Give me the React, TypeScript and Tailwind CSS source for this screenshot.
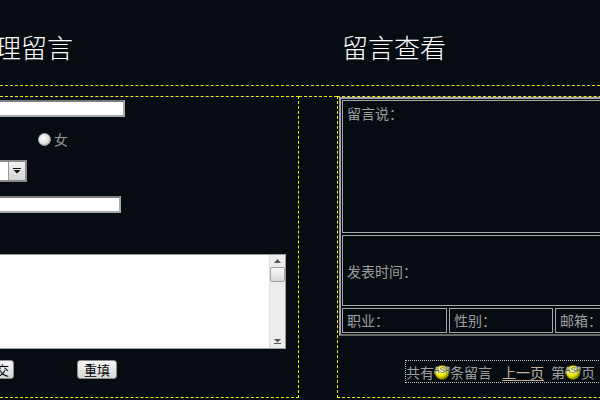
import React from "react";

function AspIcon() {
  return (
    <svg width="16" height="16" viewBox="0 0 16 16" className="inline-block align-[-4px]">
      <defs>
        <radialGradient id="ay" cx="40%" cy="35%" r="70%">
          <stop offset="0%" stopColor="#ffff90" />
          <stop offset="55%" stopColor="#e8e800" />
          <stop offset="100%" stopColor="#6a6a00" />
        </radialGradient>
      </defs>
      <circle cx="8" cy="8.5" r="7.2" fill="url(#ay)" stroke="#4a4a00" strokeWidth="0.8" />
      <text x="8" y="9" textAnchor="middle" fontSize="8.5" fontWeight="bold" letterSpacing="-0.4" fill="#1a1a1a" stroke="#ffffff" strokeWidth="0.35" fontFamily="Liberation Sans, sans-serif">ASP</text>
    </svg>
  );
}

function Radio() {
  return (
    <svg width="13" height="13" viewBox="0 0 13 13">
      <defs>
        <radialGradient id="rg" cx="40%" cy="40%" r="65%">
          <stop offset="0%" stopColor="#ffffff" />
          <stop offset="70%" stopColor="#dcdcdc" />
          <stop offset="100%" stopColor="#a0a0a0" />
        </radialGradient>
      </defs>
      <circle cx="6.5" cy="6.5" r="6" fill="url(#rg)" stroke="#b0b0b0" strokeWidth="0.8" />
    </svg>
  );
}

export default function App() {
  return (
    <div className="w-[600px] h-[400px] overflow-hidden bg-[#070c13] font-['Noto_Sans_CJK_SC',sans-serif]">
      {/* header */}
      <div className="h-[86px] border-b border-dashed border-[#e6e600] flex items-start pt-[31px]">
        <div className="ml-[-31px] w-[373px] shrink-0 text-[26px] leading-[32px] font-light text-white">管理留言</div>
        <div className="text-[26px] leading-[32px] font-light text-white">留言查看</div>
      </div>

      {/* body */}
      <div className="mt-[10px] flex h-[302px]">
        {/* left form box */}
        <div className="w-[299px] shrink-0 border-t border-r border-b border-dashed border-[#f0f000] flex flex-col items-start text-[14px]">
          <div className="mt-[3px] ml-[-6px] w-[131px] h-[17px] bg-white border-2 border-t-[#7c7c7c] border-l-[#7c7c7c] border-r-[#a8a8a8] border-b-[#a8a8a8]" />
          <div className="mt-[14px] h-[16px] flex items-center pl-[38px] gap-[3px]">
            <Radio />
            <span className="text-[14px] leading-[16px] text-[#9a9a9a]">女</span>
          </div>
          <div className="mt-[13px] ml-[-6px] h-[22px] w-[33px] flex border-2 border-[#8a8a8a] bg-white">
            <div className="flex-1" />
            <div className="w-[17px] h-full bg-gradient-to-b from-[#f4f4f4] to-[#d4d4d4] border-l border-[#9a9a9a] flex items-center justify-center">
              <svg width="8" height="6" viewBox="0 0 8 6">
                <rect x="0" y="0" width="8" height="1" fill="#111" />
                <path d="M0.5 2 L7.5 2 L4 5.5 Z" fill="#111" />
              </svg>
            </div>
          </div>
          <div className="mt-[14px] ml-[-6px] w-[127px] h-[17px] bg-white border-2 border-t-[#7c7c7c] border-l-[#7c7c7c] border-r-[#a8a8a8] border-b-[#a8a8a8]" />
          <div className="mt-[41px] ml-[-6px] w-[292px] h-[95px] bg-white border border-[#9c9c9c] flex justify-end">
            <div className="w-[16px] h-full bg-[#ececec] border-l border-[#e0e0e0] flex flex-col items-center justify-between py-[4px]">
              <div className="flex flex-col items-center gap-[4px]">
                <svg width="7" height="4" viewBox="0 0 7 4"><path d="M3.5 0 L7 4 L0 4 Z" fill="#555" /></svg>
                <div className="w-[15px] h-[15px] bg-gradient-to-b from-[#fafafa] to-[#d8d8d8] border border-[#a0a0a0] rounded-[2px]" />
              </div>
              <svg width="7" height="5" viewBox="0 0 7 5"><rect x="0" y="4" width="7" height="1" fill="#555" /><path d="M0 0 L7 0 L3.5 3.5 Z" fill="#555" /></svg>
            </div>
          </div>
          <div className="mt-[11px] flex items-start">
            <div className="ml-[-22px] w-[36px] h-[19px] bg-gradient-to-b from-[#f7f7f7] to-[#d6d6d6] border border-[#8a8a8a] rounded-[3px] text-[13px] leading-[17px] text-black text-center">提交</div>
            <div className="ml-[63px] w-[40px] h-[19px] bg-gradient-to-b from-[#f7f7f7] to-[#d6d6d6] border border-[#8a8a8a] rounded-[3px] text-[13px] leading-[17px] text-black text-center">重填</div>
          </div>
        </div>

        {/* spacer */}
        <div className="w-[38px] shrink-0 border-t border-dashed border-[#f0f000]" />

        {/* right view box */}
        <div className="w-[320px] shrink-0 border-t border-l border-b border-dashed border-[#f0f000] text-[14px] text-[#9e9e9e]">
          <div className="ml-[1px] border-2 border-t-[#a6a6a6] border-l-[#a6a6a6] border-r-[#6a6a6a] border-b-[#6a6a6a] px-[1px] py-[1px] flex flex-col gap-[2px]">
            <div className="h-[133px] border border-[#a8a8a8] pl-[4px] pt-[2px] leading-[20px]">留言说：</div>
            <div className="h-[71px] border border-[#a8a8a8] pl-[4px] flex items-center leading-[20px]">发表时间：</div>
            <div className="h-[25px] flex gap-[2px]">
              <div className="w-[105px] shrink-0 border border-[#a8a8a8] pl-[4px] flex items-center">职业：</div>
              <div className="w-[104px] shrink-0 border border-[#a8a8a8] pl-[4px] flex items-center">性别：</div>
              <div className="flex-1 border border-[#a8a8a8] pl-[4px] flex items-center">邮箱：</div>
            </div>
          </div>
          <div className="mt-[24px] ml-[67px] h-[23px] border border-dotted border-[#c8c8c8] flex items-center whitespace-nowrap leading-[20px]">
            <span>共有</span>
            <AspIcon />
            <span>条留言</span>
            <span className="ml-[10px] underline text-[#c4b29c] underline-offset-[2px]">上一页</span>
            <span className="ml-[7px]">第</span>
            <AspIcon />
            <span>页</span>
          </div>
        </div>
      </div>
    </div>
  );
}
